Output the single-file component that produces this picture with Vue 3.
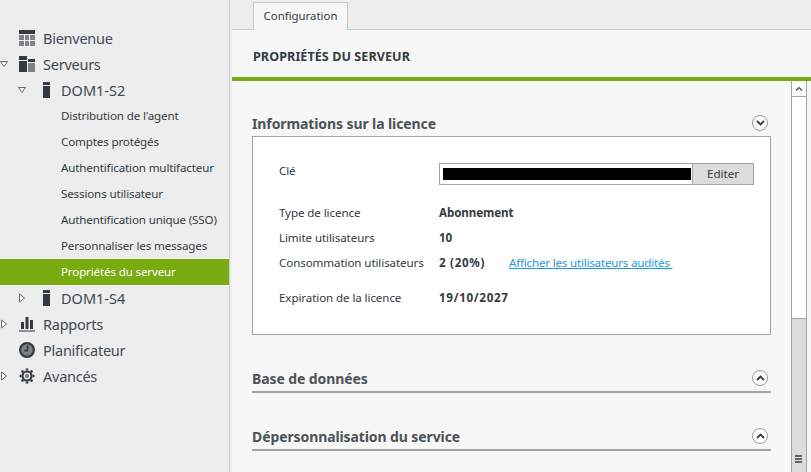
<script setup>
const subItems = [
  'Distribution de l\'agent',
  'Comptes protégés',
  'Authentification multifacteur',
  'Sessions utilisateur',
  'Authentification unique (SSO)',
  'Personnaliser les messages',
]
</script>

<template>
  <div class="app">
    <aside class="side">
      <div class="row top">
        <span class="twist"></span>
        <svg class="ico" viewBox="0 0 16 16" width="16" height="16">
          <rect x="0" y="0" width="16" height="4" fill="#333b40" />
          <path d="M0 5h5v5H0zM6 5h4v5H6zM11 5h5v5h-5zM0 11h5v5H0zM6 11h4v5H6zM11 11h5v5h-5z" fill="#7e8386" />
        </svg>
        <span>Bienvenue</span>
      </div>
      <div class="row top">
        <span class="twist"><svg width="8" height="8" viewBox="0 0 8 8"><path d="M0.5 1.5h7L4 6.5z" fill="#fff" stroke="#666" /></svg></span>
        <svg class="ico" viewBox="0 0 16 16" width="16" height="16">
          <rect x="0" y="0" width="8" height="16" fill="#333b40" />
          <rect x="0" y="4" width="8" height="1" fill="#ededed" />
          <rect x="9" y="3" width="7" height="3" fill="#333b40" />
          <rect x="9" y="7" width="7" height="9" fill="#7e8386" />
        </svg>
        <span>Serveurs</span>
      </div>
      <div class="row srv">
        <span class="twist"><svg width="8" height="8" viewBox="0 0 8 8"><path d="M0.5 1.5h7L4 6.5z" fill="#fff" stroke="#666" /></svg></span>
        <svg class="srv-ico" viewBox="0 0 7 16" width="7" height="16">
          <rect width="7" height="16" fill="#333b40" />
          <rect y="3" width="7" height="1" fill="#ededed" />
        </svg>
        <span>DOM1-S2</span>
      </div>
      <div v-for="item in subItems" :key="item" class="row sub">{{ item }}</div>
      <div class="row sub active">Propriétés du serveur</div>
      <div class="row srv">
        <span class="twist"><svg width="8" height="10" viewBox="0 0 8 10"><path d="M1.5 1v8L6.5 5z" fill="#fff" stroke="#666" /></svg></span>
        <svg class="srv-ico" viewBox="0 0 7 16" width="7" height="16">
          <rect width="7" height="16" fill="#333b40" />
          <rect y="3" width="7" height="1" fill="#ededed" />
        </svg>
        <span>DOM1-S4</span>
      </div>
      <div class="row top">
        <span class="twist"><svg width="8" height="10" viewBox="0 0 8 10"><path d="M1.5 1v8L6.5 5z" fill="#fff" stroke="#666" /></svg></span>
        <svg class="ico" viewBox="0 0 16 16" width="16" height="16">
          <path d="M2 6h3v7H2zM6.5 1h3v12h-3zM11 4h3v9h-3z" fill="#333b40" />
          <rect x="0" y="14" width="16" height="2" fill="#8a8f92" />
        </svg>
        <span>Rapports</span>
      </div>
      <div class="row top">
        <span class="twist"></span>
        <svg class="ico" viewBox="0 0 16 16" width="16" height="16">
          <circle cx="8" cy="8" r="6.9" fill="#7e8386" stroke="#333b40" stroke-width="2.2" />
          <path d="M8.5 3.5v5.2H5.2" fill="none" stroke="#333b40" stroke-width="1.7" />
        </svg>
        <span>Planificateur</span>
      </div>
      <div class="row top">
        <span class="twist"><svg width="8" height="10" viewBox="0 0 8 10"><path d="M1.5 1v8L6.5 5z" fill="#fff" stroke="#666" /></svg></span>
        <svg class="ico" viewBox="0 0 16 16" width="16" height="16">
          <path d="M8 2.5v-2M8 15.5v-2M2.5 8h-2M15.5 8h-2M4.1 4.1L2.7 2.7M13.3 13.3l-1.4-1.4M4.1 11.9l-1.4 1.4M13.3 2.7l-1.4 1.4" stroke="#333b40" stroke-width="2.6" />
          <circle cx="8" cy="8" r="4.5" fill="#ededed" stroke="#333b40" stroke-width="2.2" />
          <circle cx="8" cy="8" r="2.2" fill="#7e8386" />
        </svg>
        <span>Avancés</span>
      </div>
    </aside>

    <main class="main">
      <div class="tabs">
        <div class="tab">Configuration</div>
      </div>
      <div class="panel">
        <h1 class="title">PROPRIÉTÉS DU SERVEUR</h1>
        <div class="body">
          <div class="scroll">
            <section class="section first">
              <div class="sec-head plain">
                <h2>Informations sur la licence</h2>
                <span class="round"><svg width="9" height="6" viewBox="0 0 9 6"><path d="M1 1l3.5 3.5L8 1" fill="none" stroke="#333b40" stroke-width="1.8" /></svg></span>
              </div>
              <div class="card">
                <div class="key-row">
                  <span class="label">Clé</span>
                  <div class="key-field">
                    <div class="input"><span class="mask"></span></div>
                    <button class="btn" type="button">Editer</button>
                  </div>
                </div>
                <div class="info">
                  <span class="label">Type de licence</span><b>Abonnement</b>
                  <span class="label">Limite utilisateurs</span><b>10</b>
                  <span class="label">Consommation utilisateurs</span>
                  <span class="usage"><b class="wide">2 (20%)</b><a class="link">Afficher les utilisateurs audités&nbsp;</a></span>
                </div>
                <div class="info exp">
                  <span class="label">Expiration de la licence</span><b class="wide">19/10/2027</b>
                </div>
              </div>
            </section>
            <section class="section">
              <div class="sec-head">
                <h2>Base de données</h2>
                <span class="round"><svg width="9" height="6" viewBox="0 0 9 6"><path d="M1 5l3.5-3.5L8 5" fill="none" stroke="#333b40" stroke-width="1.8" /></svg></span>
              </div>
            </section>
            <section class="section">
              <div class="sec-head">
                <h2>Dépersonnalisation du service</h2>
                <span class="round"><svg width="9" height="6" viewBox="0 0 9 6"><path d="M1 5l3.5-3.5L8 5" fill="none" stroke="#333b40" stroke-width="1.8" /></svg></span>
              </div>
            </section>
          </div>
          <div class="sbar">
            <div class="sbtn"><svg width="8" height="5" viewBox="0 0 8 5"><path d="M1 4.5l3-3 3 3" fill="none" stroke="#444" stroke-width="1.2" /></svg></div>
            <div class="strack"></div>
            <div class="sthumb">
              <span class="grip"></span>
            </div>
          </div>
        </div>
      </div>
    </main>
  </div>
</template>

<style scoped>
.app {
  display: flex;
  width: 811px;
  height: 472px;
  overflow: hidden;
  background: #ededed;
  font-family: "Noto Sans", "Open Sans", sans-serif;
  color: #333b40;
}
.side {
  width: 229px;
  flex: none;
  padding-top: 25px;
  border-right: 1px solid #cdcdcd;
  background: #ededed;
}
.row {
  display: flex;
  align-items: center;
  height: 26px;
  box-sizing: border-box;
  white-space: nowrap;
}
.top {
  font-size: 14.5px;
  letter-spacing: -0.25px;
  color: #3f4a52;
}
.srv {
  font-size: 14.5px;
  letter-spacing: 0;
  padding-left: 18px;
  color: #3f4a52;
}
.twist {
  width: 19px;
  flex: none;
  display: flex;
}
.top .ico {
  margin-right: 8px;
  flex: none;
}
.srv .twist {
  width: 25px;
}
.srv-ico {
  flex: none;
  margin-right: 11px;
}
.sub {
  padding: 0 0 2px 61px;
  font-size: 11.6px;
  color: #333b40;
  letter-spacing: -0.15px;
}
.active {
  background: #7aab10;
  color: #fff;
}
.main {
  flex: 1;
  min-width: 0;
  border-left: 2px solid #efefef;
  background: #ededed;
  display: flex;
  flex-direction: column;
}
.tabs {
  height: 29px;
  flex: none;
  padding: 2px 0 0 21px;
  box-sizing: border-box;
}
.tab {
  width: 95px;
  height: 28px;
  box-sizing: border-box;
  border: 1px solid #c8c8c8;
  border-bottom: none;
  background: #f7f7f7;
  font-size: 11.4px;
  text-align: center;
  line-height: 25px;
  position: relative;
  z-index: 1;
  color: #333b40;
}
.panel {
  flex: 1;
  min-height: 0;
  border-top: 1px solid #c8c8c8;
  background: #f7f7f7;
  display: flex;
  flex-direction: column;
}
.title {
  margin: 0;
  height: 51px;
  flex: none;
  box-sizing: border-box;
  padding-left: 21px;
  border-bottom: 4px solid #7aab10;
  font-size: 12.6px;
  font-weight: 700;
  line-height: 54px;
  letter-spacing: 0.05px;
  color: #333b40;
}
.body {
  flex: 1;
  min-height: 0;
  display: flex;
  overflow: hidden;
}
.scroll {
  flex: 1;
  min-width: 0;
  padding: 0 20px 0 20px;
}
.section {
  padding-top: 27px;
}
.section.first {
  padding-top: 26px;
}
.sec-head {
  position: relative;
  height: 31px;
  box-sizing: border-box;
  border-bottom: 2px solid #a3a3a3;
  display: flex;
  align-items: flex-end;
}
.sec-head.plain {
  border-bottom: none;
  height: 29px;
}
h2 {
  margin: 0;
  font-size: 14px;
  font-weight: 700;
  letter-spacing: -0.1px;
  color: #4c5357;
  line-height: 20px;
  padding-bottom: 2px;
}
.round {
  position: absolute;
  right: 3px;
  bottom: 5px;
  width: 16px;
  height: 16px;
  box-sizing: border-box;
  border: 1px solid #9a9a9a;
  border-radius: 50%;
  background: #fff;
  display: flex;
  align-items: center;
  justify-content: center;
}
.card {
  height: 199px;
  box-sizing: border-box;
  border: 1px solid #a3a3a3;
  background: #fff;
  padding: 26px 16px 0 26px;
  font-size: 11.6px;
}
.key-row {
  display: flex;
  height: 22px;
}
.label {
  width: 160px;
  flex: none;
  color: #333b40;
  letter-spacing: -0.1px;
}
.key-field {
  display: flex;
  height: 22px;
  width: 315px;
}
.input {
  flex: 1;
  box-sizing: border-box;
  border: 1px solid #a3a3a3;
  border-right: none;
  background: #fff;
  padding: 4px 1px 0 3px;
}
.mask {
  display: block;
  height: 12px;
  background: #000;
}
.btn {
  width: 62px;
  flex: none;
  box-sizing: border-box;
  height: 22px;
  padding: 0 0 2px;
  border: 1px solid #a3a3a3;
  background: #dcdcdc;
  font: inherit;
  color: #333b40;
}
.info {
  display: grid;
  grid-template-columns: 160px 1fr;
  grid-auto-rows: 24.75px;
  align-items: center;
  margin-top: 15.5px;
}
.exp {
  margin-top: 10.5px;
}
.info b {
  font-weight: 700;
  letter-spacing: -0.1px;
}
.info b.wide {
  letter-spacing: 0.7px;
}
.usage {
  display: flex;
  align-items: center;
}
.usage b {
  width: 70px;
  flex: none;
}
.link {
  color: #1e96dc;
  text-decoration: underline;
  letter-spacing: -0.2px;
}
.sbar {
  width: 16px;
  flex: none;
  box-sizing: border-box;
  margin-right: 4px;
  border-left: 1px solid #a3a3a3;
  border-right: 1px solid #a3a3a3;
  background: #fff;
  display: flex;
  flex-direction: column;
}
.sbtn {
  height: 16px;
  box-sizing: border-box;
  border-bottom: 1px solid #a3a3a3;
  display: flex;
  align-items: center;
  justify-content: center;
  flex: none;
}
.strack {
  height: 221px;
  flex: none;
}
.sthumb {
  flex: 1;
  border-top: 1px solid #a3a3a3;
  background: #dcdcdc;
  position: relative;
}
.grip {
  position: absolute;
  left: 3px;
  top: 136px;
  width: 7px;
  height: 8px;
  background: repeating-linear-gradient(#666 0 2px, transparent 2px 3px);
}
</style>

<style>
html, body { margin: 0; }
</style>
